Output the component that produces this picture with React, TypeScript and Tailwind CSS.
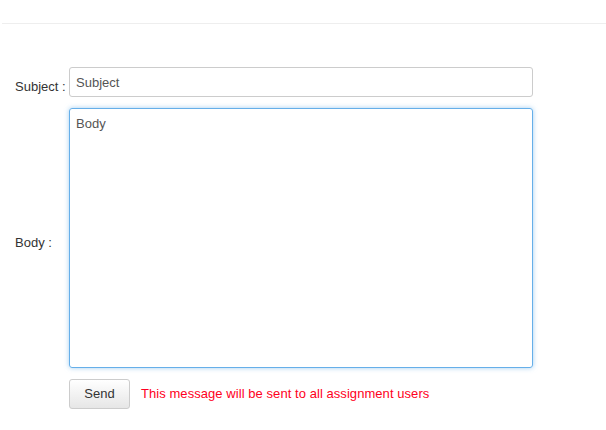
import React from "react"

const font = { fontFamily: '"Liberation Sans", Arial, sans-serif' }

export default function App() {
  return (
    <div className="min-h-screen w-full bg-white text-[13px] text-[#333]" style={font}>
      <div className="pl-[2px] pt-[23px]">
        <div className="h-px w-full bg-[#eeeeee]" />
      </div>

      <form className="mt-[43px] pl-[15px]" onSubmit={(e) => e.preventDefault()}>
        <div className="flex items-center">
          <label className="w-[54px] shrink-0 pt-[8px] leading-none">Subject :</label>
          <input
            type="text"
            placeholder="Subject"
            className="h-[30px] w-[464px] rounded-[3px] border border-[#cccccc] px-[6px] text-[13px] text-[#555] placeholder:text-[#555] outline-none"
            style={font}
          />
        </div>

        <div className="mt-[11px] flex items-center">
          <label className="w-[54px] shrink-0 pt-[8px] leading-none">Body :</label>
          <textarea
            placeholder="Body"
            className="h-[260px] w-[464px] resize-none rounded-[3px] border border-[#66afe9] px-[6px] py-[7px] text-[13px] leading-[16px] text-[#555] placeholder:text-[#555] shadow-[0_0_5px_rgba(102,175,233,0.6)] outline-none"
            style={font}
          />
        </div>

        <div className="mt-[11px] flex items-center pl-[54px]">
          <button
            type="submit"
            className="h-[30px] w-[61px] rounded-[3px] border border-[#cccccc] bg-gradient-to-b from-white to-[#e6e6e6] text-[13px] text-[#333]"
            style={font}
          >
            Send
          </button>
          <span className="ml-[11px] text-[13px] tracking-[0.06px] text-[#ff0022]">
            This message will be sent to all assignment users
          </span>
        </div>
      </form>
    </div>
  )
}
